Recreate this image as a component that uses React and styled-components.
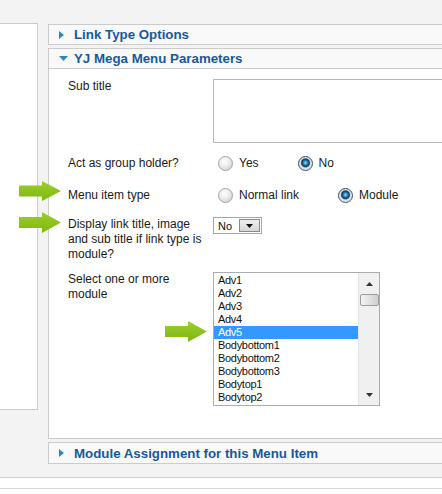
import React from 'react'
import styled, { createGlobalStyle } from 'styled-components'

const GlobalStyle = createGlobalStyle`
  html, body { margin:0; padding:0; background:#fff; overflow:hidden; }
  body {
    font-family:"Liberation Sans", Arial, sans-serif;
    font-size:12px;
    color:#1a1a1a;
  }
`

const Page = styled.div`
  background:#f3f3f3;
  padding:23px 0 13px;
  border-bottom:1px solid #cdcdcd;
  display:flex;
  align-items:flex-start;
  gap:10px;
  overflow:hidden;
`

const SideBox = styled.div`
  flex:none;
  width:37px;
  height:385px;
  background:#fff;
  border:1px solid #cbcbcb;
  border-left:none;
`

const Column = styled.div`
  flex:1;
  min-width:0;
  margin-top:1px;
  display:flex;
  flex-direction:column;
  gap:3px;
`

const Pane = styled.div`
  background:#fff;
  border:1px solid #cbcbcb;
  border-right:none;
`

const PaneHead = styled.div`
  height:${p => p.$h || 19}px;
  display:flex;
  align-items:center;
  padding-left:10px;
  background:#f9f9f9;
  border:${p => p.$inside ? 'none' : '1px solid #cbcbcb'};
  border-right:none;
  border-bottom:1px solid #cbcbcb;
  font-weight:bold;
  font-size:13.3px;
  color:#17599a;
  white-space:nowrap;
`

const Caret = styled.span`
  width:9px;
  margin-right:6px;
  display:flex;
  align-items:center;
`

const Body = styled.div`
  padding:10px 0 32px 19px;
`

const Row = styled.div`
  position:relative;
  display:grid;
  grid-template-columns:145px 1fr;
  align-items:${p => p.$center ? 'center' : 'start'};
  min-height:${p => p.$h || 0}px;
  margin-top:${p => p.$mt || 0}px;
`

const Label = styled.div`
  line-height:15px;
`

const Arrow = styled.svg`
  position:absolute;
  left:${p => p.$x}px;
  top:${p => p.$y}px;
`

const TextBox = styled.textarea`
  box-sizing:border-box;
  width:260px;
  height:64px;
  border:1px solid #b9b9b9;
  resize:none;
  outline:none;
  margin:0;
  display:block;
`

const RadioGroup = styled.div`
  display:flex;
  align-items:center;
  padding-left:5px;
`

const Option = styled.label`
  display:flex;
  align-items:center;
  margin-right:39px;
`

const RadioDot = styled.span`
  box-sizing:border-box;
  width:15px;
  height:15px;
  border-radius:50%;
  margin-right:6px;
  border:1px solid ${p => p.$on ? '#36536c' : '#a2a2a2'};
  background:${p => p.$on
    ? 'radial-gradient(circle at 50% 45%, #9fe0ff 0, #2a86c4 2px, #0b3a62 3.8px, #5f6d78 4.3px, #dcdcdc 5px, #f7f7f7 100%)'
    : 'radial-gradient(circle at 40% 35%, #ffffff 0, #ececec 45%, #c6c6c6 100%)'};
`

const Select = styled.div`
  box-sizing:border-box;
  width:49px;
  height:17px;
  border:1px solid #a6a6a6;
  background:#fff;
  display:flex;
  align-items:center;
  justify-content:space-between;
  padding:0 1px 0 4px;
  font-size:11px;
  color:#111;
`

const DropBtn = styled.span`
  box-sizing:border-box;
  width:21px;
  height:13px;
  border:1px solid #8a8a8a;
  background:linear-gradient(#f0f0f0, #d6d6d6);
  display:flex;
  align-items:center;
  justify-content:center;
`

const ListBox = styled.div`
  box-sizing:border-box;
  width:167px;
  height:134px;
  border:1px solid #acacac;
  display:flex;
  background:#fff;
`

const Items = styled.div`
  flex:1;
  padding-top:1px;
`

const Item = styled.div`
  height:13px;
  line-height:13px;
  padding-left:4px;
  font-size:11px;
  letter-spacing:-0.3px;
  color:${p => p.$sel ? '#fff' : '#111'};
  background:${p => p.$sel ? '#3399ff' : 'transparent'};
`

const ScrollBar = styled.div`
  width:20px;
  background:#f0f0f0;
  border-left:1px solid #e4e4e4;
  display:flex;
  flex-direction:column;
  align-items:center;
  padding-top:9px;
`

const Thumb = styled.div`
  box-sizing:border-box;
  width:19px;
  height:12px;
  margin-top:8px;
  border:1px solid #9c9c9c;
  border-radius:2px;
  background:linear-gradient(90deg, #f4f4f4, #dedede 60%, #cfcfcf);
`

const Spacer = styled.div`
  flex:1;
`

const Footer = styled.div`
  height:10px;
  border-bottom:1px solid #d6d6d6;
`

const GreenArrow = ({ x, y, h = 20 }) => (
  <Arrow $x={x} $y={y} width="42" height={h} viewBox={`0 0 42 ${h}`}>
    <defs>
      <linearGradient id="ga" x1="0" y1="0" x2="0" y2="1">
        <stop offset="0" stopColor="#9ccf2a" />
        <stop offset="1" stopColor="#7fb514" />
      </linearGradient>
    </defs>
    <polygon
      points={`0,${h / 2 - 5.5} 23,${h / 2 - 5.5} 23,0 42,${h / 2} 23,${h} 23,${h / 2 + 5.5} 0,${h / 2 + 5.5}`}
      fill="url(#ga)"
    />
  </Arrow>
)

const Tri = ({ down, color = '#2a87c3' }) => (
  down
    ? <svg width="9" height="5"><polygon points="0,0 9,0 4.5,5" fill={color} /></svg>
    : <svg width="5" height="8"><polygon points="0,0 5,4 0,8" fill={color} /></svg>
)

const Radio = ({ on, children }) => (
  <Option>
    <RadioDot $on={on} />
    {children}
  </Option>
)

const modules = ['Adv1', 'Adv2', 'Adv3', 'Adv4', 'Adv5', 'Bodybottom1', 'Bodybottom2', 'Bodybottom3', 'Bodytop1', 'Bodytop2']

export default function App() {
  return (
    <>
      <GlobalStyle />
      <Page>
        <SideBox />
        <Column>
          <PaneHead>
            <Caret><Tri /></Caret>
            Link Type Options
          </PaneHead>

          <Pane>
            <PaneHead $inside>
              <Caret><Tri down /></Caret>
              YJ Mega Menu Parameters
            </PaneHead>
            <Body>
              <Row>
                <Label>Sub title</Label>
                <TextBox />
              </Row>

              <Row $center $h={20} $mt={10}>
                <Label>Act as group holder?</Label>
                <RadioGroup>
                  <Radio>Yes</Radio>
                  <Radio on>No</Radio>
                </RadioGroup>
              </Row>

              <Row $center $h={20} $mt={12}>
                <GreenArrow x={-49} y={-4} />
                <Label>Menu item type</Label>
                <RadioGroup>
                  <Radio>Normal link</Radio>
                  <Radio on>Module</Radio>
                </RadioGroup>
              </Row>

              <Row $mt={12}>
                <GreenArrow x={-49} y={-5} h={21} />
                <Label>Display link title, image<br />and sub title if link type is<br />module?</Label>
                <Select>
                  No
                  <DropBtn>
                    <svg width="7" height="4"><polygon points="0,0 7,0 3.5,4" fill="#111" /></svg>
                  </DropBtn>
                </Select>
              </Row>

              <Row $mt={10}>
                <GreenArrow x={97} y={49} h={21} />
                <Label>Select one or more<br />module</Label>
                <ListBox>
                  <Items>
                    {modules.map(m => (
                      <Item key={m} $sel={m === 'Adv5'}>{m}</Item>
                    ))}
                  </Items>
                  <ScrollBar>
                    <svg width="7" height="4"><polygon points="0,4 3.5,0 7,4" fill="#333" /></svg>
                    <Thumb />
                    <Spacer />
                    <svg width="7" height="4" style={{ marginBottom: 8 }}><polygon points="0,0 7,0 3.5,4" fill="#333" /></svg>
                  </ScrollBar>
                </ListBox>
              </Row>
            </Body>
          </Pane>

          <PaneHead $h={20}>
            <Caret><Tri /></Caret>
            Module Assignment for this Menu Item
          </PaneHead>
        </Column>
      </Page>
      <Footer />
    </>
  )
}
